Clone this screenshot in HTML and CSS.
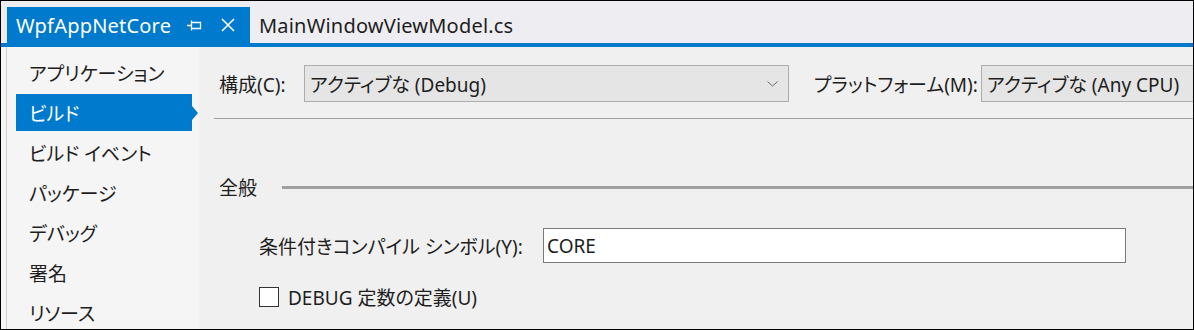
FILE: index.html
```html
<!DOCTYPE html>
<html>
<head>
    <title>WpfAppNetCore</title>
    <meta charset="utf-8">
    <link rel="stylesheet" href="styles.css">
</head>
<body>

<div class="frame">

  <div class="tabstrip">
    <div class="tab active">
      <span class="tab-title">WpfAppNetCore</span>
      <svg class="pin" width="15" height="11" viewBox="0 0 15 11">
        <path d="M0 5.5H4.5M4.5 0.5V10.5M4.5 2.5H13.5V8.5H4.5" fill="none" stroke="#ffffff" stroke-width="1.3"/>
      </svg>
      <svg class="close" width="14" height="14" viewBox="0 0 14 14">
        <path d="M1 1L13 13M13 1L1 13" fill="none" stroke="#ffffff" stroke-width="1.6"/>
      </svg>
    </div>
    <div class="tab">
      <span class="tab-title">MainWindowViewModel.cs</span>
    </div>
  </div>
  <div class="tabline"></div>

  <div class="body">

    <!-- property pages -->
    <div class="side">
      <div class="item">アプリケーション</div>
      <div class="item selected">ビルド</div>
      <div class="item">ビルド イベント</div>
      <div class="item">パッケージ</div>
      <div class="item">デバッグ</div>
      <div class="item">署名</div>
      <div class="item">リソース</div>
    </div>

    <div class="main">
      <div class="config-row">
        <span class="cfg-label">構成(C):</span>
        <div class="combo combo-config">
          <span>アクティブな (Debug)</span>
          <svg class="chevron" width="11" height="6" viewBox="0 0 11 6">
            <path d="M0.5 0.5L5.5 5L10.5 0.5" fill="none" stroke="#6a6a6a" stroke-width="1"/>
          </svg>
        </div>
        <span class="plat-label">プラットフォーム(M):</span>
        <div class="combo combo-platform">
          <span>アクティブな (Any CPU)</span>
        </div>
      </div>
      <div class="rule"></div>

      <div class="section-head">
        <span>全般</span>
        <div class="section-line"></div>
      </div>

      <div class="field-row">
        <span class="field-label">条件付きコンパイル シンボル(Y):</span>
        <div class="textbox">CORE</div>
      </div>

      <div class="check-row">
        <span class="checkbox"></span>
        <span>DEBUG 定数の定義(U)</span>
      </div>
    </div>

  </div>
</div>

</body>
</html>
```

FILE: styles.css
```css
* {
  box-sizing: border-box;
}

body {
  margin: 0;
  padding: 0;
  background-color: #ffffff;
  color: #1e1e1e;
  font-family: "Segoe UI", "Noto Sans", "Noto Sans CJK JP", sans-serif;
  font-feature-settings: "palt";
}

.frame {
  width: 1194px;
  height: 330px;
  border: 1px solid #000000;
  overflow: hidden;
  display: flex;
  flex-direction: column;
  background-color: #f5f5f5;
}

/* Document tabs */
.tabstrip {
  height: 42px;
  flex: none;
  display: flex;
  align-items: flex-end;
  padding-left: 6px;
  background-color: #eeeef2;
}
.tab {
  height: 36px;
  display: flex;
  align-items: center;
  padding: 0 9px;
  font-size: 20px;
  color: #1e1e1e;
}
.tab.active {
  background-color: #007acc;
  color: #ffffff;
  width: 243px;
}
.tab-title {
  white-space: nowrap;
  letter-spacing: 0.2px;
}
.pin {
  margin-left: auto;
  margin-right: 19px;
}
.close {
  margin-right: 6px;
}
.tabline {
  height: 4px;
  flex: none;
  background-color: #007acc;
}

.body {
  flex: 1;
  display: flex;
  min-height: 0;
}

/* Left list of pages */
.side {
  width: 193px;
  flex: none;
  margin-left: 5px;
  padding-top: 7px;
  border-left: 1px solid #cdd0da;
  background-color: #f5f5f5;
}
.item {
  position: relative;
  height: 37px;
  margin: 0 0 3px 9px;
  width: 176px;
  padding-left: 13px;
  display: flex;
  align-items: center;
  font-size: 19px;
  white-space: nowrap;
}
.item.selected {
  background-color: #007acc;
  color: #ffffff;
}
.item.selected::after {
  content: "";
  position: absolute;
  left: 100%;
  top: 12px;
  border-top: 7px solid transparent;
  border-bottom: 7px solid transparent;
  border-left: 6px solid #007acc;
}

/* Right content */
.main {
  flex: 1;
  min-width: 0;
  padding: 18px 0 0 20px;
  background-color: #f0f0f0;
  font-size: 19px;
  white-space: nowrap;
}
.config-row {
  display: flex;
  align-items: center;
  height: 37px;
}
.cfg-label {
  width: 85px;
  flex: none;
}
.plat-label {
  width: 167px;
  flex: none;
  margin-left: 25px;
}
.combo {
  height: 37px;
  flex: none;
  display: flex;
  align-items: center;
  padding-left: 5px;
  background-color: #e5e5e5;
  border: 1px solid #adadad;
}
.combo-config {
  width: 485px;
}
.combo-platform {
  width: 240px;
}
.chevron {
  margin-left: auto;
  margin-right: 10px;
}
.rule {
  height: 1px;
  margin: 16px 0 0 -5px;
  background-color: #a0a0a0;
}

.section-head {
  display: flex;
  align-items: center;
  height: 24px;
  margin-top: 56px;
}
.section-line {
  flex: 1;
  height: 3px;
  margin-left: 25px;
  background-color: #a0a0a0;
}

.field-row {
  display: flex;
  align-items: center;
  margin: 29px 0 0 40px;
}
.field-label {
  width: 284px;
  flex: none;
}
.textbox {
  width: 583px;
  height: 35px;
  display: flex;
  align-items: center;
  padding-left: 3px;
  background-color: #ffffff;
  border: 1px solid #7a7a7a;
}

.check-row {
  display: flex;
  align-items: center;
  margin: 20px 0 0 40px;
}
.checkbox {
  width: 20px;
  height: 20px;
  margin-right: 9px;
  background-color: #ffffff;
  border: 1px solid #333333;
}
```
